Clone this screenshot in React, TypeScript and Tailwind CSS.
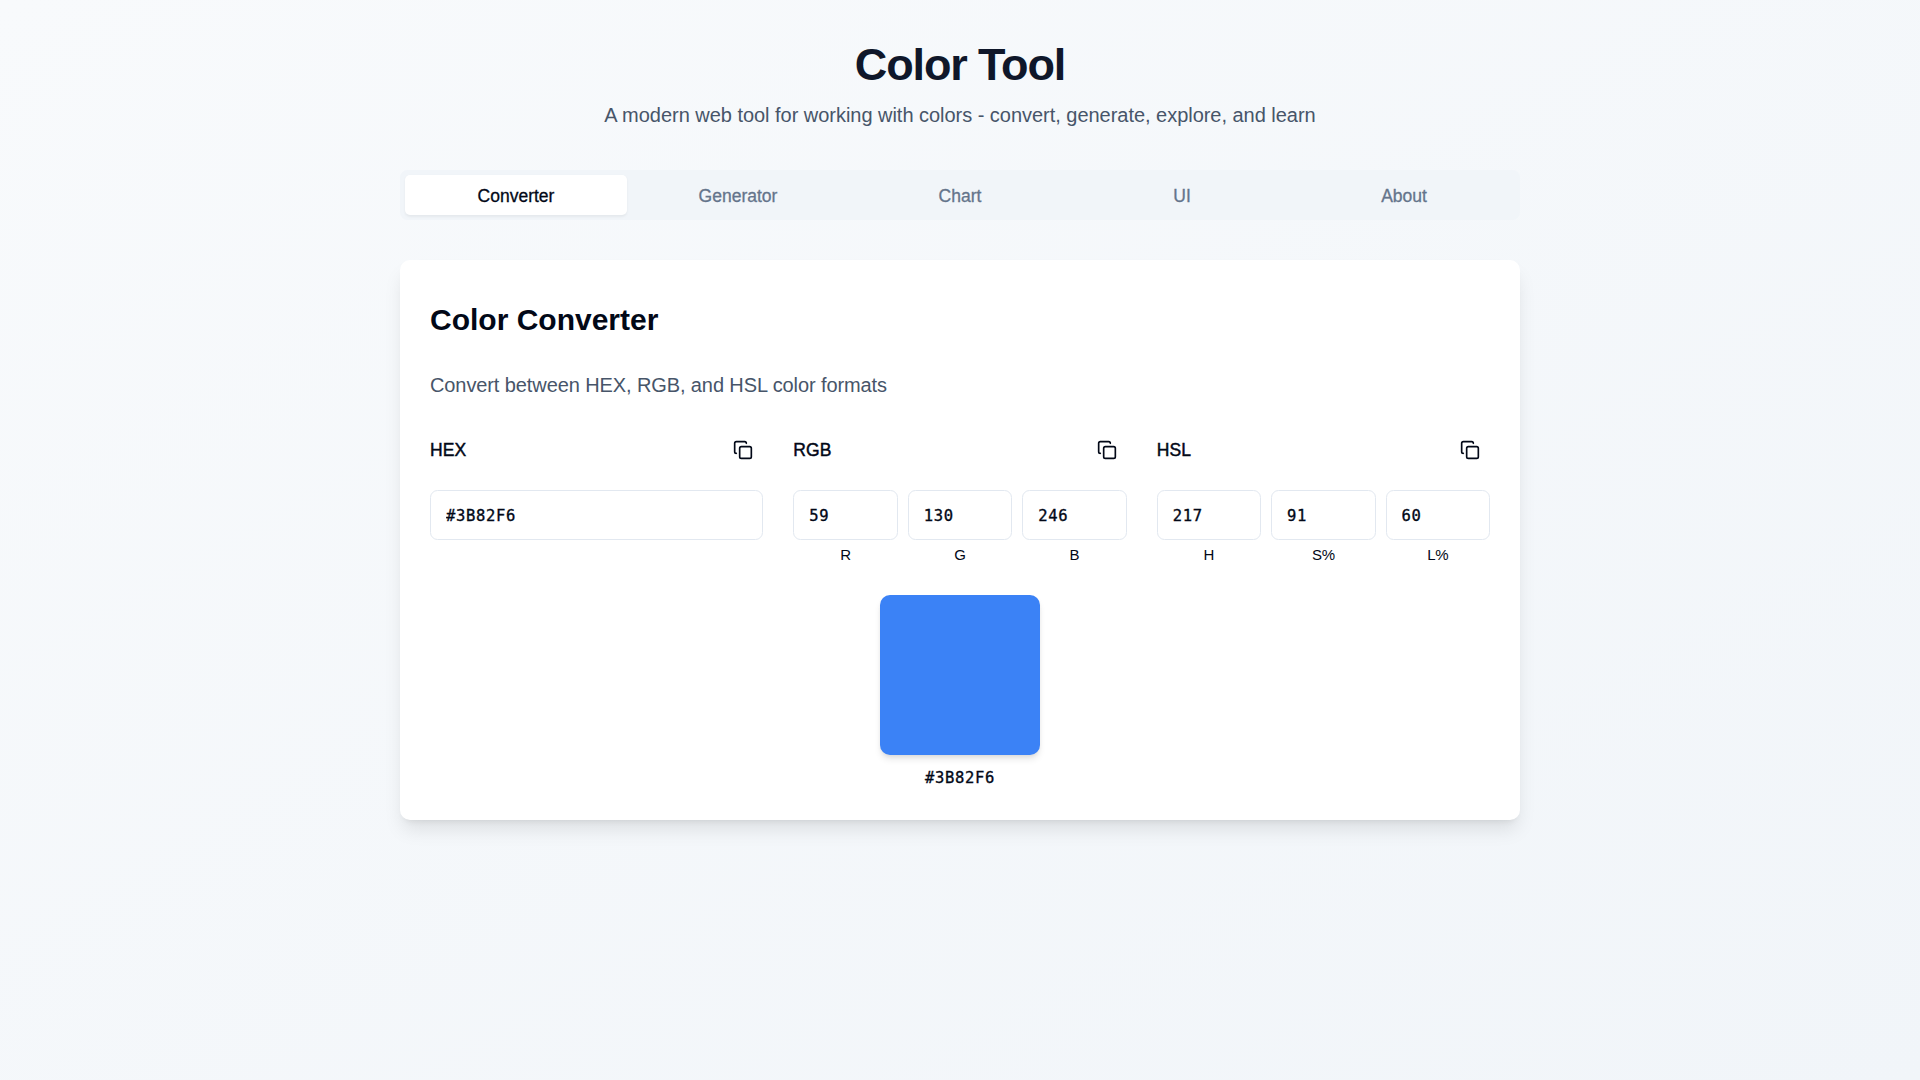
import React from "react";
import { Copy } from "lucide-react";

const tabs = ["Converter", "Generator", "Chart", "UI", "About"];

function Field({ value, label }: { value: string; label?: string }) {
  return (
    <div className="min-w-0">
      <input
        defaultValue={value}
        aria-label={label ?? "HEX"}
        className="block h-[50px] w-full rounded-[7.5px] border border-[#e2e8f0] bg-white px-[15px] pt-[10px] pb-2 font-['DejaVu_Sans_Mono',monospace] text-[15.5px] tracking-[0.67px] text-[#020817] [-webkit-text-stroke:0.35px]"
      />
      {label && <div className="mt-[5px] text-center text-[15px] leading-5 tracking-[-0.3px] text-[#020817]">{label}</div>}
    </div>
  );
}

function Group({ title, children }: { title: string; children: React.ReactNode }) {
  return (
    <div className="space-y-5">
      <div className="flex items-center justify-between">
        <span className="text-[17.5px] font-medium tracking-[0.1px] [-webkit-text-stroke:0.45px]">{title}</span>
        <button aria-label={`Copy ${title}`} className="flex size-10 items-center justify-center">
          <Copy size={20} />
        </button>
      </div>
      {children}
    </div>
  );
}

export default function App() {
  return (
    <div className="min-h-screen bg-[linear-gradient(to_bottom_right,#f8fafc,#f1f5f9)] font-['Liberation_Sans',Arial,sans-serif] text-[#020817]">
      <div className="mx-auto w-[1120px] pt-10">
        <header className="mb-10 text-center">
          <h1 className="mb-[10px] text-[45px] leading-[50px] font-bold tracking-tight text-[#0f172a]">Color Tool</h1>
          <p className="text-xl leading-[30px] tracking-[-0.03px] text-[#475569]">
            A modern web tool for working with colors - convert, generate, explore, and learn
          </p>
        </header>
        <nav className="grid h-[50px] grid-cols-5 rounded-[7.5px] bg-[#f1f5f9] p-[5px]">
          {tabs.map((t, i) => (
            <button
              key={t}
              className={
                i === 0
                  ? "rounded-[5px] bg-white pt-0.5 text-[17.5px] font-medium shadow-[0_1.25px_2.5px_rgb(0_0_0/0.05)] [-webkit-text-stroke:0.3px]"
                  : "pt-0.5 text-[17.5px] font-medium text-[#64748b] [-webkit-text-stroke:0.3px]"
              }
            >
              {t}
            </button>
          ))}
        </nav>
        <main className="mt-10 rounded-[10px] bg-white p-[30px] shadow-[0_12.5px_18.75px_-3.75px_rgb(0_0_0/0.1),0_5px_7.5px_-5px_rgb(0_0_0/0.1)]">
          <h2 className="pt-3 text-3xl leading-9 font-bold">Color Converter</h2>
          <p className="mt-8 mb-[30px] text-xl leading-[30px] tracking-[-0.1px] text-[#475569]">
            Convert between HEX, RGB, and HSL color formats
          </p>
          <div className="grid grid-cols-3 gap-[30px]">
            <Group title="HEX"><Field value="#3B82F6" /></Group>
            <Group title="RGB">
              <div className="grid grid-cols-3 gap-[10px]">
                <Field value="59" label="R" />
                <Field value="130" label="G" />
                <Field value="246" label="B" />
              </div>
            </Group>
            <Group title="HSL">
              <div className="grid grid-cols-3 gap-[10px]">
                <Field value="217" label="H" />
                <Field value="91" label="S%" />
                <Field value="60" label="L%" />
              </div>
            </Group>
          </div>
          <div className="mt-[30px] flex flex-col items-center">
            <div className="size-40 rounded-[10px] bg-[#3b82f6] shadow-[0_5px_7.5px_-1.25px_rgb(0_0_0/0.1),0_2.5px_5px_-2.5px_rgb(0_0_0/0.1)]" />
            <div className="mt-[11px] -mb-px font-['DejaVu_Sans_Mono',monospace] text-[15.5px] leading-[25px] tracking-[0.67px] [-webkit-text-stroke:0.35px]">
              #3B82F6
            </div>
          </div>
        </main>
      </div>
    </div>
  );
}
